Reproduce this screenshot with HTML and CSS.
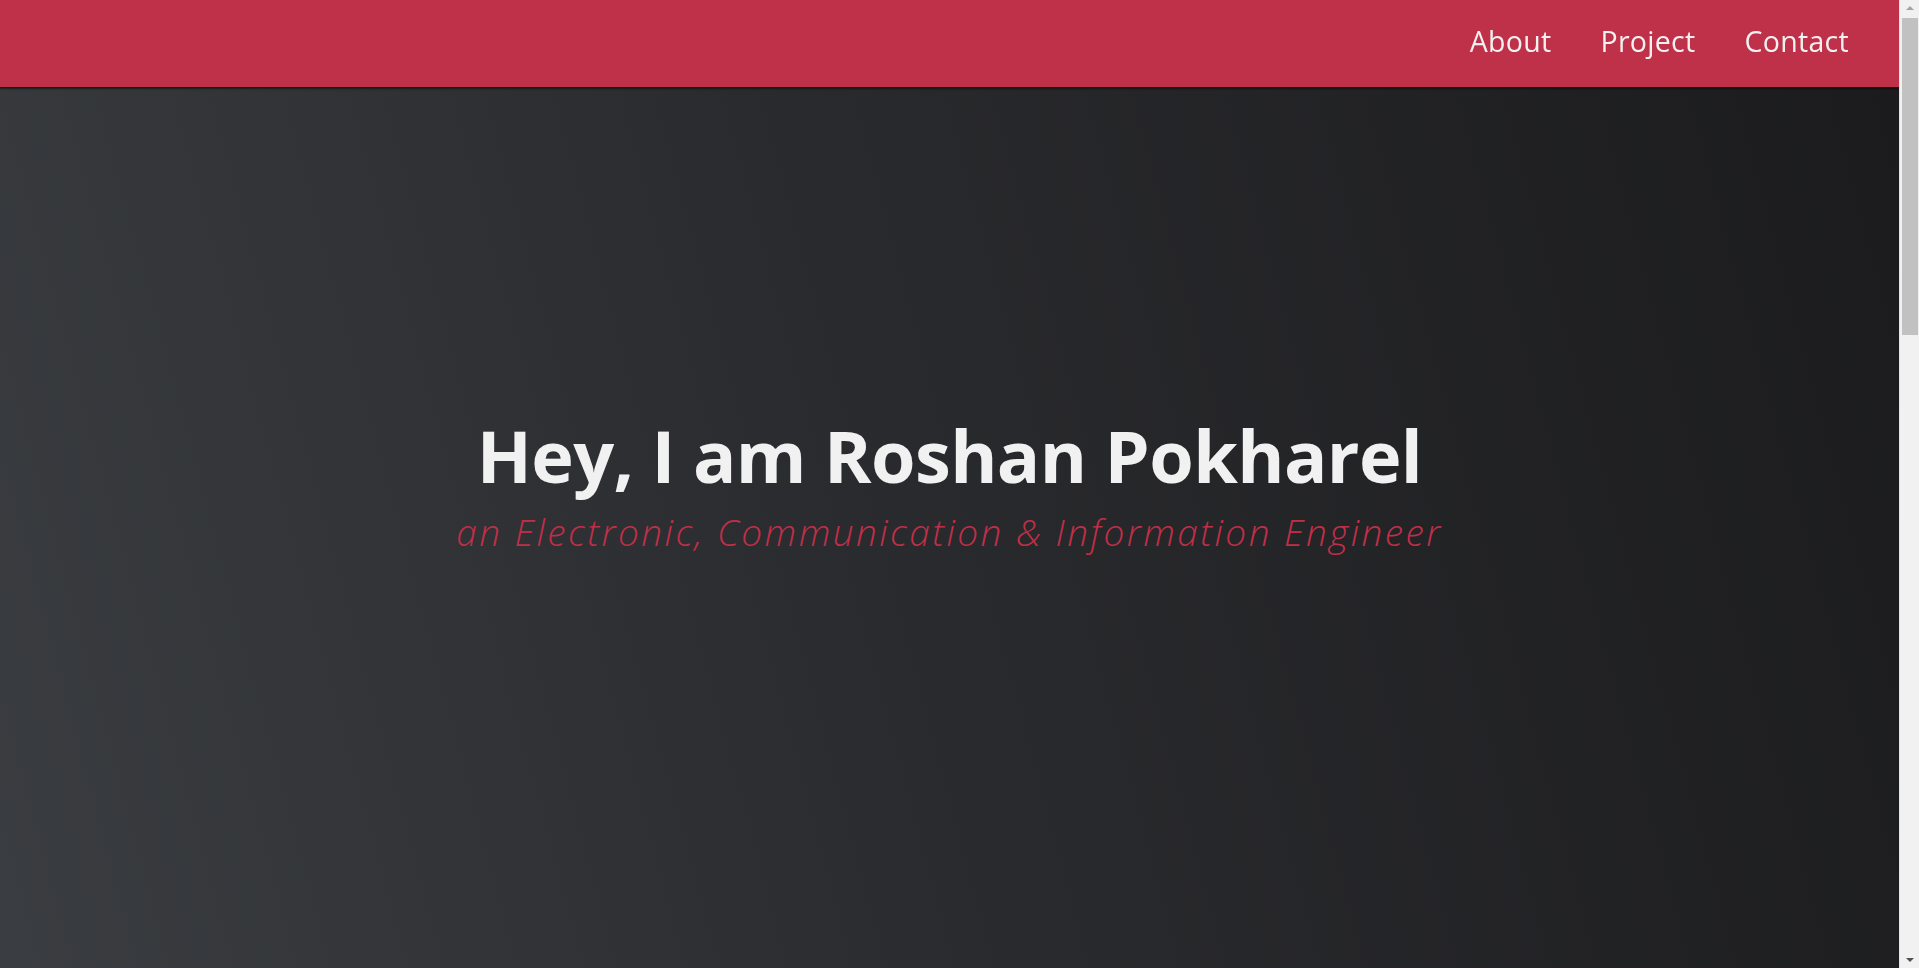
FILE: index.html
```html
<!DOCTYPE html>
<html lang="en">
<head>
<meta charset="utf-8">
<title>Roshan Pokharel</title>
<link rel="stylesheet" href="styles.css">
</head>
<body>
<nav class="topnav">
  <ul class="nav-list">
    <li><a href="#about" class="nav-link">About</a></li>
    <li><a href="#project" class="nav-link">Project</a></li>
    <li><a href="#contact" class="nav-link">Contact</a></li>
  </ul>
</nav>
<header class="hero">
  <h1 class="hero-title">Hey, I am Roshan Pokharel</h1>
  <p class="hero-sub">an Electronic, Communication &amp; Information Engineer</p>
</header>
<section class="section" id="about"></section>
<section class="section" id="project"></section>
<section class="section" id="contact"></section>
<div class="fake-scrollbar" aria-hidden="true">
  <span class="sb-arrow sb-up"></span>
  <span class="sb-thumb"></span>
  <span class="sb-arrow sb-down"></span>
</div>
</body>
</html>
```
FILE: styles.css
```css
* { box-sizing: border-box; }
html, body { margin: 0; padding: 0; }
body {
  font-family: "Lato", "Open Sans", sans-serif;
  background: #1f2022;
  color: #f1f1f1;
  padding-right: 20px;
}
.topnav {
  position: fixed;
  top: 0;
  left: 0;
  right: 20px;
  height: 87px;
  background: #bf3049;
  box-shadow: 0 1px 1px #111, 0 2px 2px rgba(0,0,0,0.4);
  display: flex;
  justify-content: flex-end;
  align-items: center;
  padding-right: 50px;
  padding-bottom: 5px;
  z-index: 10;
}
.nav-list {
  list-style: none;
  margin: 0;
  padding: 0;
  display: flex;
  gap: 49px;
}
.nav-link {
  color: #f1f1f1;
  text-decoration: none;
  font-family: "Open Sans", sans-serif;
  font-size: 28.5px;
  font-weight: 400;
  letter-spacing: 0.3px;
}
.hero {
  height: 100vh;
  display: flex;
  flex-direction: column;
  align-items: center;
  justify-content: center;
  background: linear-gradient(75deg, #3a3d41 0%, #2a2b2e 45%, #1b1b1d 100%);
  padding-top: 2px;
}
.hero-title {
  margin: 0;
  font-family: "Open Sans", sans-serif;
  font-weight: 700;
  font-size: 72px;
  line-height: 1.1;
  color: #f1f1f1;
  letter-spacing: -0.6px;
}
.hero-sub {
  margin: 15px 0 0;
  font-family: "Open Sans", sans-serif;
  font-style: italic;
  font-weight: 300;
  font-size: 37px;
  line-height: 1.2;
  letter-spacing: 2.45px;
  color: #c02f48;
}
.section {
  height: 1440px;
  background: #1f2022;
}
.fake-scrollbar {
  position: fixed;
  top: 0;
  right: 0;
  width: 20px;
  height: 100vh;
  background: #f1f1f1;
  border-left: 1px solid #e3e3e3;
  z-index: 20;
}
.sb-thumb {
  position: absolute;
  left: 2px;
  right: 1px;
  top: 18px;
  height: 317px;
  background: #c1c1c1;
}
.sb-arrow {
  position: absolute;
  left: 6px;
  width: 0;
  height: 0;
  border-left: 4px solid transparent;
  border-right: 4px solid transparent;
}
.sb-up {
  top: 6px;
  border-bottom: 4px solid #a3a3a3;
}
.sb-down {
  bottom: 6px;
  border-top: 4px solid #505050;
}
```
